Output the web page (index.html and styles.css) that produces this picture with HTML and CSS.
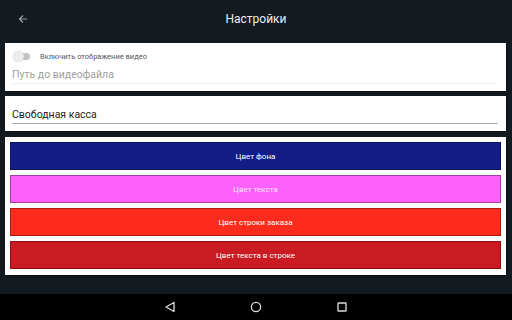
FILE: index.html
```html
<!DOCTYPE html>
<html>
<head>
    <meta charset="utf-8">
    <link rel="stylesheet" href="styles.css">
</head>
<body>
    <div class="screen">
        <header class="toolbar">
            <svg class="back-icon" width="10" height="10" viewBox="0 0 10 10">
                <path d="M9 5H1.5M5 1.5L1.5 5L5 8.5" fill="none" stroke="#9aa0a4" stroke-width="1.2"/>
            </svg>
            <h1 class="toolbar-title">Настройки</h1>
        </header>

        <main class="content">
            <section class="panel panel-video">
                <div class="switch-row">
                    <span class="switch"><span class="switch-thumb"></span></span>
                    <span class="switch-label">Включить отображение видео</span>
                </div>
                <div class="field field-disabled">Путь до видеофайла</div>
            </section>

            <section class="panel panel-name">
                <div class="field">Свободная касса</div>
            </section>

            <section class="panel panel-colors">
                <button class="color-btn bg-color">Цвет фона</button>
                <button class="color-btn text-color">Цвет текста</button>
                <button class="color-btn row-color">Цвет строки заказа</button>
                <button class="color-btn row-text-color">Цвет текста в строке</button>
            </section>
        </main>

        <nav class="navbar">
            <svg width="12" height="12" viewBox="0 0 12 12">
                <path d="M10 1.5L2 6L10 10.5Z" fill="none" stroke="#ddd" stroke-width="1.3" stroke-linejoin="round"/>
            </svg>
            <svg width="12" height="12" viewBox="0 0 12 12">
                <circle cx="6" cy="6" r="4.6" fill="none" stroke="#ddd" stroke-width="1.3"/>
            </svg>
            <svg width="12" height="12" viewBox="0 0 12 12">
                <rect x="2" y="2" width="8" height="8" rx="0.6" fill="none" stroke="#ddd" stroke-width="1.3"/>
            </svg>
        </nav>
    </div>
</body>
</html>
```

FILE: styles.css
```css
html, body {
    margin: 0;
    padding: 0;
}

body {
    font-family: Roboto, "Noto Sans", sans-serif;
    background: #131b21;
}

.screen {
    width: 512px;
    height: 320px;
    display: flex;
    flex-direction: column;
    overflow: hidden;
}

.toolbar {
    height: 37px;
    display: flex;
    align-items: center;
    position: relative;
}

.back-icon {
    margin-left: 18px;
}

.toolbar-title {
    position: absolute;
    left: 0;
    right: 0;
    margin: 0;
    text-align: center;
    font-size: 12px;
    font-weight: 400;
    color: #ececec;
    pointer-events: none;
}

.content {
    flex: 1;
    padding: 6px 6px 0 5px;
    display: flex;
    flex-direction: column;
    gap: 5px;
}

.panel {
    background: #fff;
    box-shadow: 1px 1px 2px rgba(0,0,0,0.5);
}

.panel-video {
    height: 48px;
    padding: 0 10px 0 7px;
}

.switch-row {
    display: flex;
    align-items: center;
    height: 24px;
    padding-top: 1px;
}

.switch {
    position: relative;
    width: 15px;
    height: 7px;
    border-radius: 4px;
    background: #c4c4c4;
    margin-left: 3px;
}

.switch-thumb {
    position: absolute;
    left: -2px;
    top: -2px;
    width: 11px;
    height: 11px;
    border-radius: 50%;
    background: #ececec;
    box-shadow: 0 0 1px rgba(0,0,0,0.25);
}

.switch-label {
    margin-left: 10px;
    font-size: 7.5px;
    color: #555;
}

.field {
    font-size: 10.5px;
    color: #222;
    padding-bottom: 2px;
    border-bottom: 1px solid #a8a8a8;
}

.field-disabled {
    color: #a0a0a0;
    border-bottom-color: #f0f0f0;
}

.panel-name {
    height: 35px;
    padding: 0 8px 7px 7px;
    display: flex;
    flex-direction: column;
    justify-content: flex-end;
    box-sizing: border-box;
}

.panel-colors {
    margin-top: 1px;
    padding: 5px 5px 6px 5px;
    display: flex;
    flex-direction: column;
    gap: 5px;
}

.color-btn {
    height: 28px;
    border: 1px solid rgba(0,0,0,0.35);
    font-family: Roboto, "Noto Sans", sans-serif;
    font-size: 8px;
    color: #fff;
    padding: 0;
}

.bg-color { background: #131c87; }
.text-color { background: #fd60fb; color: #fde6fd; }
.row-color { background: #fd2b1b; }
.row-text-color { background: #c91b21; }

.navbar {
    height: 26px;
    background: #000;
    display: flex;
    justify-content: center;
    align-items: center;
    gap: 74px;
}
```
